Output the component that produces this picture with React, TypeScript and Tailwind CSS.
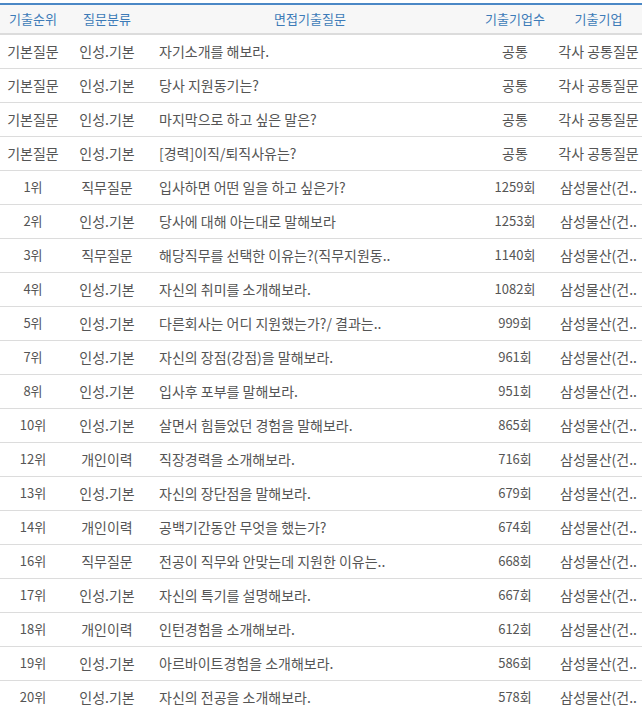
import React from "react";

type Row = [string, string, string, string, string];

const rows: Row[] = [
  ["기본질문", "인성.기본", "자기소개를 해보라.", "공통", "각사 공통질문"],
  ["기본질문", "인성.기본", "당사 지원동기는?", "공통", "각사 공통질문"],
  ["기본질문", "인성.기본", "마지막으로 하고 싶은 말은?", "공통", "각사 공통질문"],
  ["기본질문", "인성.기본", "[경력]이직/퇴직사유는?", "공통", "각사 공통질문"],
  ["1위", "직무질문", "입사하면 어떤 일을 하고 싶은가?", "1259회", "삼성물산(건.."],
  ["2위", "인성.기본", "당사에 대해 아는대로 말해보라", "1253회", "삼성물산(건.."],
  ["3위", "직무질문", "해당직무를 선택한 이유는?(직무지원동..", "1140회", "삼성물산(건.."],
  ["4위", "인성.기본", "자신의 취미를 소개해보라.", "1082회", "삼성물산(건.."],
  ["5위", "인성.기본", "다른회사는 어디 지원했는가?/ 결과는..", "999회", "삼성물산(건.."],
  ["7위", "인성.기본", "자신의 장점(강점)을 말해보라.", "961회", "삼성물산(건.."],
  ["8위", "인성.기본", "입사후 포부를 말해보라.", "951회", "삼성물산(건.."],
  ["10위", "인성.기본", "살면서 힘들었던 경험을 말해보라.", "865회", "삼성물산(건.."],
  ["12위", "개인이력", "직장경력을 소개해보라.", "716회", "삼성물산(건.."],
  ["13위", "인성.기본", "자신의 장단점을 말해보라.", "679회", "삼성물산(건.."],
  ["14위", "개인이력", "공백기간동안 무엇을 했는가?", "674회", "삼성물산(건.."],
  ["16위", "직무질문", "전공이 직무와 안맞는데 지원한 이유는..", "668회", "삼성물산(건.."],
  ["17위", "인성.기본", "자신의 특기를 설명해보라.", "667회", "삼성물산(건.."],
  ["18위", "개인이력", "인턴경험을 소개해보라.", "612회", "삼성물산(건.."],
  ["19위", "인성.기본", "아르바이트경험을 소개해보라.", "586회", "삼성물산(건.."],
  ["20위", "인성.기본", "자신의 전공을 소개해보라.", "578회", "삼성물산(건.."],
];

export default function App() {
  return (
    <div
      className="w-[642px] bg-white pt-[3px]"
      style={{ fontFamily: '"Noto Sans CJK KR", "Noto Sans", sans-serif' }}
    >
      <table className="w-[642px] table-fixed border-collapse text-[14px] text-[#555]">
        <colgroup>
          <col className="w-[66px]" />
          <col className="w-[82px]" />
          <col className="w-[324px]" />
          <col className="w-[86px]" />
          <col className="w-[84px]" />
        </colgroup>
        <thead>
          <tr className="h-[30px] border-t-2 border-b-2 border-t-[#4b88c6] border-b-[#dcdcdc] bg-[#f7f7f7] text-[13px] text-[#3d7bb8]">
            <th className="p-0 text-center font-normal">기출순위</th>
            <th className="p-0 text-center font-normal">질문분류</th>
            <th className="p-0 text-center font-normal">면접기출질문</th>
            <th className="p-0 text-center font-normal">기출기업수</th>
            <th className="p-0 pr-[3px] text-center font-normal">기출기업</th>
          </tr>
        </thead>
        <tbody>
          {rows.map((r, i) => {
            const common = r[3] === "공통";
            return (
              <tr key={i} className="h-[34px] border-b border-[#dcdcdc]">
                <td className={`p-0 text-center whitespace-nowrap ${common ? "text-[14px]" : "text-[13px]"}`}>{r[0]}</td>
                <td className="p-0 text-center whitespace-nowrap">{r[1]}</td>
                <td className="py-0 pl-[11px] pr-0 text-left whitespace-nowrap overflow-hidden">{r[2]}</td>
                <td className={`p-0 text-center whitespace-nowrap ${common ? "text-[14px]" : "text-[13px]"}`}>{r[3]}</td>
                <td className="p-0 pr-[3px] text-center whitespace-nowrap overflow-visible">{r[4]}</td>
              </tr>
            );
          })}
        </tbody>
      </table>
    </div>
  );
}
